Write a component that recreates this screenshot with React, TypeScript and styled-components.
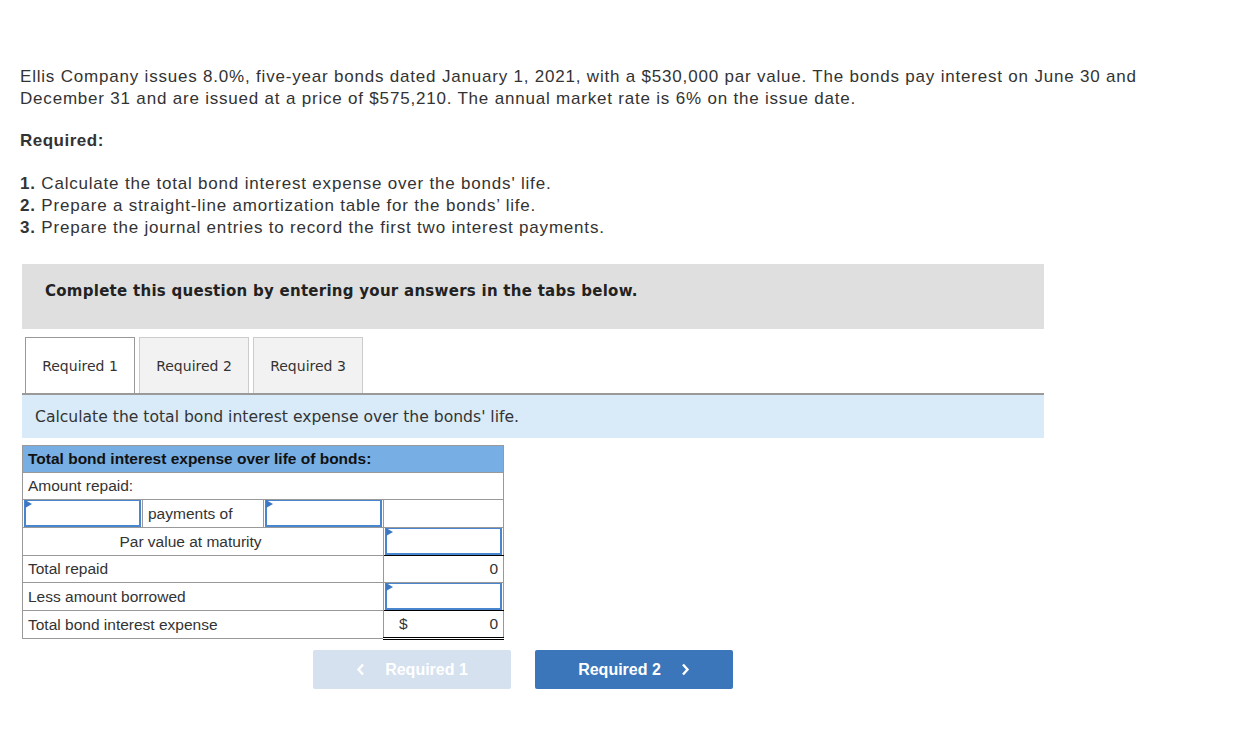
import styled, { createGlobalStyle } from 'styled-components';

const GlobalStyle = createGlobalStyle`
  body {
    margin: 0;
    background: #fff;
    font-family: 'Liberation Sans', Arial, sans-serif;
    color: #333;
  }
`;

const Page = styled.div`
  width: 1249px;
  padding: 66px 0 40px 20px;
  box-sizing: border-box;
`;

const Intro = styled.p`
  margin: 0;
  width: 1130px;
  font-size: 17px;
  line-height: 22px;
  letter-spacing: 0.8px;
  color: #333;
`;

const Heading = styled.p`
  margin: 20px 0 0;
  font-size: 17px;
  line-height: 22px;
  font-weight: 700;
  letter-spacing: 0.5px;
`;

const List = styled.div`
  margin-top: 21px;
  font-size: 17px;
  line-height: 22px;
  letter-spacing: 0.8px;
`;

const Panel = styled.div`
  margin: 25px 0 0 2px;
  width: 1022px;
`;

const Banner = styled.div`
  height: 65px;
  box-sizing: border-box;
  background: #dfdfdf;
  display: flex;
  align-items: center;
  padding: 0 0 11px 23px;
  font-family: 'DejaVu Sans', Verdana, sans-serif;
  font-weight: 700;
  font-size: 15px;
  letter-spacing: 0.27px;
  color: #222;
`;

const Tabs = styled.div`
  display: flex;
  gap: 4px;
  margin-top: 8px;
  padding-left: 3px;
  border-bottom: 2px solid #9a9a9a;
`;

const Tab = styled.div<{ $active?: boolean }>`
  width: 110px;
  height: 56px;
  box-sizing: border-box;
  display: flex;
  align-items: center;
  justify-content: center;
  font-family: 'DejaVu Sans', Verdana, sans-serif;
  font-size: 14px;
  color: #333;
  background: ${p => (p.$active ? '#fff' : '#f2f2f2')};
  border: 1px solid ${p => (p.$active ? '#999' : '#ccc')};
  border-bottom: none;
`;

const Instruction = styled.div`
  height: 43px;
  background: #d9ebf8;
  display: flex;
  align-items: center;
  padding-left: 13px;
  font-family: 'DejaVu Sans', Verdana, sans-serif;
  font-size: 15.6px;
  color: #333;
`;

const Table = styled.table`
  margin-top: 7px;
  border-collapse: collapse;
  width: 481px;
  table-layout: fixed;
  font-family: 'Liberation Sans', Arial, sans-serif;
  font-size: 15.5px;
  color: #333;
  border: 1px solid #999;
`;

const HeadCell = styled.th`
  background: #77aee4;
  text-align: left;
  font-size: 15.5px;
  font-weight: 700;
  color: #111;
  height: 26px;
  padding: 0 0 0 5px;
  border: 1px solid #999;
`;

const Cell = styled.td<{ $align?: 'left' | 'center' | 'right'; $under?: 'single' | 'double' }>`
  height: 26px;
  padding: 0 5px;
  text-align: ${p => p.$align || 'left'};
  border: 1px solid #999;
  ${p => p.$under === 'single' && 'border-bottom: 1px solid #000;'}
  ${p => p.$under === 'double' && 'border-bottom: 3px double #000;'}
`;

const InputCell = styled.td<{ $under?: boolean }>`
  height: 27px;
  padding: 0;
  border: 1px solid #999;
  ${p => p.$under && 'border-bottom: 1px solid #000;'}
`;

const AnswerBox = styled.div`
  position: relative;
  height: 27px;
  box-sizing: border-box;
  margin: 0 1px;
  border: 2px solid #4a85cf;
  border-top-width: 1px;
  background: #fff;
  &::before {
    content: '';
    position: absolute;
    left: -1px;
    top: -1px;
    border-left: 7px solid #3d78c4;
    border-top: 4px solid transparent;
    border-bottom: 4px solid transparent;
  }
`;

const Split = styled.div`
  display: flex;
  justify-content: space-between;
`;

const Nav = styled.div`
  display: flex;
  gap: 24px;
  margin: 10px 0 0 293px;
`;

const NavButton = styled.button<{ $disabled?: boolean }>`
  width: 198px;
  height: 39px;
  border: none;
  border-radius: 2px;
  background: ${p => (p.$disabled ? '#d5e1ef' : '#3a76b9')};
  color: #fff;
  font-family: 'Liberation Sans', Arial, sans-serif;
  font-weight: 700;
  font-size: 16px;
  display: flex;
  align-items: center;
  justify-content: center;
  gap: 20px;
  padding: 0;
`;

const Chevron = ({ dir }: { dir: 'left' | 'right' }) => (
  <svg width="9" height="13" viewBox="0 0 9 13">
    <path
      d={dir === 'left' ? 'M7 1.5 L2.5 6.5 L7 11.5' : 'M2 1.5 L6.5 6.5 L2 11.5'}
      fill="none"
      stroke="#fff"
      strokeWidth="2.4"
    />
  </svg>
);

export default function App() {
  return (
    <Page>
      <GlobalStyle />
      <Intro>
        Ellis Company issues 8.0%, five-year bonds dated January 1, 2021, with a $530,000 par value. The bonds pay
        interest on June 30 and December 31 and are issued at a price of $575,210. The annual market rate is 6% on
        the issue date.
      </Intro>
      <Heading>Required:</Heading>
      <List>
        <div>
          <b>1.</b> Calculate the total bond interest expense over the bonds' life.
        </div>
        <div>
          <b>2.</b> Prepare a straight-line amortization table for the bonds’ life.
        </div>
        <div>
          <b>3.</b> Prepare the journal entries to record the first two interest payments.
        </div>
      </List>
      <Panel>
        <Banner>Complete this question by entering your answers in the tabs below.</Banner>
        <Tabs>
          <Tab $active>Required 1</Tab>
          <Tab>Required 2</Tab>
          <Tab>Required 3</Tab>
        </Tabs>
        <Instruction>Calculate the total bond interest expense over the bonds' life.</Instruction>
        <Table>
          <colgroup>
            <col style={{ width: 120 }} />
            <col style={{ width: 121 }} />
            <col style={{ width: 120 }} />
            <col style={{ width: 120 }} />
          </colgroup>
          <thead>
            <tr>
              <HeadCell colSpan={4}>Total bond interest expense over life of bonds:</HeadCell>
            </tr>
          </thead>
          <tbody>
            <tr>
              <Cell colSpan={4}>Amount repaid:</Cell>
            </tr>
            <tr>
              <InputCell>
                <AnswerBox />
              </InputCell>
              <Cell>payments of</Cell>
              <InputCell>
                <AnswerBox />
              </InputCell>
              <Cell />
            </tr>
            <tr>
              <Cell colSpan={3} $align="center" style={{ paddingRight: 30 }}>
                Par value at maturity
              </Cell>
              <InputCell $under>
                <AnswerBox />
              </InputCell>
            </tr>
            <tr>
              <Cell colSpan={3}>Total repaid</Cell>
              <Cell $align="right">0</Cell>
            </tr>
            <tr>
              <Cell colSpan={3}>Less amount borrowed</Cell>
              <InputCell $under>
                <AnswerBox />
              </InputCell>
            </tr>
            <tr>
              <Cell colSpan={3}>Total bond interest expense</Cell>
              <Cell $under="double">
                <Split>
                  <span style={{ paddingLeft: 10 }}>$</span>
                  <span>0</span>
                </Split>
              </Cell>
            </tr>
          </tbody>
        </Table>
      </Panel>
      <Nav>
        <NavButton $disabled>
          <Chevron dir="left" />
          Required 1
        </NavButton>
        <NavButton>
          Required 2
          <Chevron dir="right" />
        </NavButton>
      </Nav>
    </Page>
  );
}
